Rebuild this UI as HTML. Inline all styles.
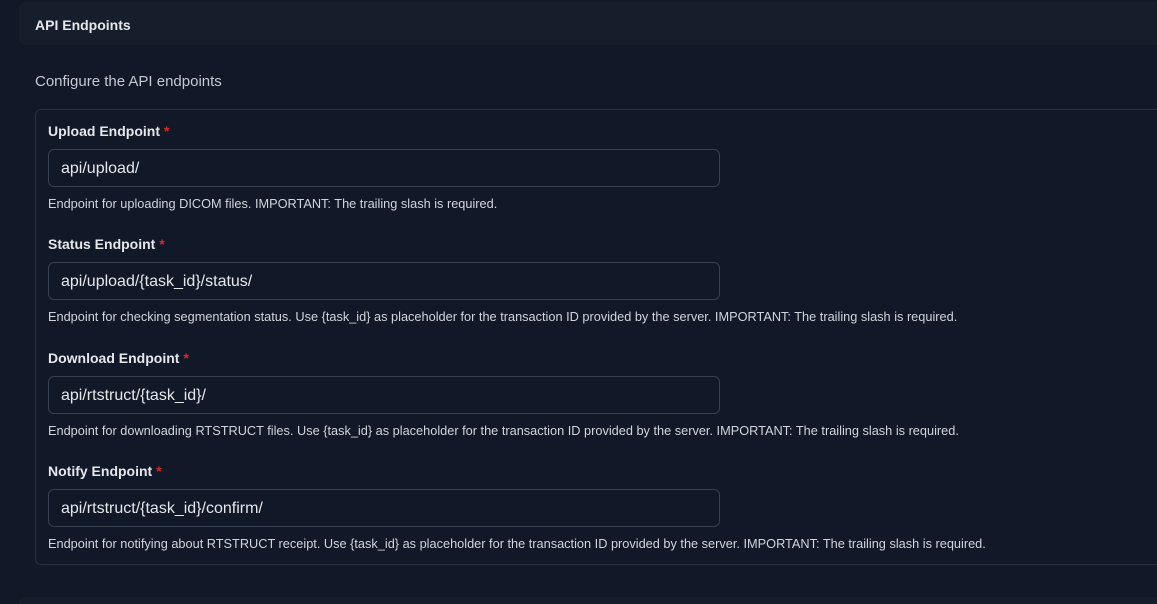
<!DOCTYPE html>
<html><head><style>
html,body{margin:0;width:1157px;height:604px;overflow:hidden}
body{background:#111827;font-family:"Liberation Sans",sans-serif;position:relative}
.hdr{position:absolute;left:19px;top:2px;width:1160px;height:43px;background:#161e2c;border-radius:6px}
.hdr span{position:absolute;left:16px;top:15px;color:#e5e7eb;font-weight:bold;font-size:14px}
.sub{position:absolute;left:35px;top:73px;color:#c4c9d2;font-size:15px}
.box{position:absolute;left:35px;top:109px;width:1140px;height:454px;border:1px solid #273142;border-radius:6px}
.g{position:absolute;left:48px}
.lbl{color:#e5e7eb;font-weight:bold;font-size:14px;height:18px}
.lbl b{color:#dc2626;font-weight:bold}
.inp{margin-top:8px;border:1px solid #374151;border-radius:6px;box-sizing:border-box;width:672px;height:38px;color:#e5e7eb;font-size:16px;padding:10px 0 0 12px}
.help{margin-top:9px;color:#d1d5db;font-size:12.75px}
.bot{position:absolute;left:19px;top:597px;width:1160px;height:20px;background:#161e2c;border-radius:6px}
</style></head><body>
<div class="hdr"><span>API Endpoints</span></div>
<div class="sub">Configure the API endpoints</div>
<div class="box"></div>
<div class="g" style="top:123px"><div class="lbl">Upload Endpoint <b>*</b></div><div class="inp">api/upload/</div><div class="help">Endpoint for uploading DICOM files. IMPORTANT: The trailing slash is required.</div></div>
<div class="g" style="top:236px"><div class="lbl">Status Endpoint <b>*</b></div><div class="inp">api/upload/{task_id}/status/</div><div class="help">Endpoint for checking segmentation status. Use {task_id} as placeholder for the transaction ID provided by the server. IMPORTANT: The trailing slash is required.</div></div>
<div class="g" style="top:350px"><div class="lbl">Download Endpoint <b>*</b></div><div class="inp">api/rtstruct/{task_id}/</div><div class="help">Endpoint for downloading RTSTRUCT files. Use {task_id} as placeholder for the transaction ID provided by the server. IMPORTANT: The trailing slash is required.</div></div>
<div class="g" style="top:463px"><div class="lbl">Notify Endpoint <b>*</b></div><div class="inp">api/rtstruct/{task_id}/confirm/</div><div class="help">Endpoint for notifying about RTSTRUCT receipt. Use {task_id} as placeholder for the transaction ID provided by the server. IMPORTANT: The trailing slash is required.</div></div>
<div class="bot"></div>
</body></html>
